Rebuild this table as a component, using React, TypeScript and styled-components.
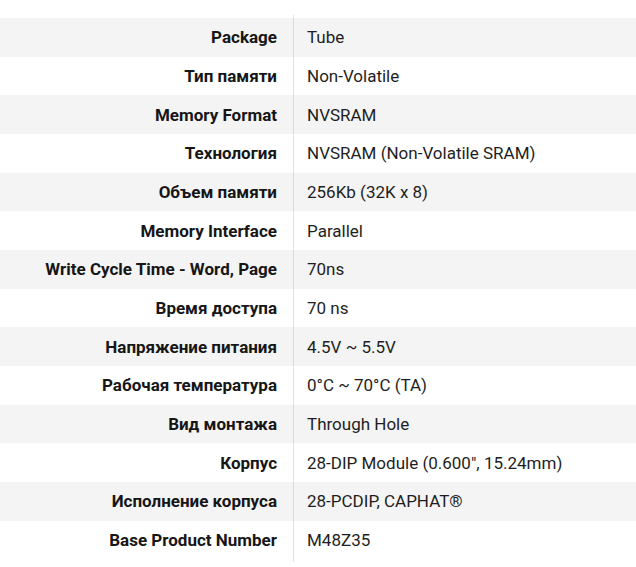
import React from "react";
import styled, { createGlobalStyle } from "styled-components";

const Global = createGlobalStyle`
  html, body { margin: 0; padding: 0; background: #ffffff; }
  body { font-family: Roboto, "Liberation Sans", sans-serif; color: #1b1b1b; }
`;

const Page = styled.div`
  padding-top: 15px;
`;

const Table = styled.div`
  display: flex;
  flex-direction: column;
  padding: 3px 0;
  background: linear-gradient(#e3e3e3, #e3e3e3) no-repeat 293px 0 / 1px 100%;
`;

const Row = styled.div<{ $shaded: boolean }>`
  display: grid;
  grid-template-columns: 293px 1fr;
  height: 38.67px;
  align-items: center;
  background: ${(p) => (p.$shaded ? "rgba(0, 0, 0, 0.043)" : "transparent")};
`;

const Label = styled.div`
  text-align: right;
  padding-right: 16px;
  font-weight: 700;
  font-size: 17px;
  color: #161616;
  white-space: nowrap;
`;

const Value = styled.div`
  padding-left: 14px;
  font-size: 17px;
  color: #1e1e1e;
  white-space: nowrap;
`;

const rows: [string, string][] = [
  ["Package", "Tube"],
  ["Тип памяти", "Non-Volatile"],
  ["Memory Format", "NVSRAM"],
  ["Технология", "NVSRAM (Non-Volatile SRAM)"],
  ["Объем памяти", "256Kb (32K x 8)"],
  ["Memory Interface", "Parallel"],
  ["Write Cycle Time - Word, Page", "70ns"],
  ["Время доступа", "70 ns"],
  ["Напряжение питания", "4.5V ~ 5.5V"],
  ["Рабочая температура", "0°C ~ 70°C (TA)"],
  ["Вид монтажа", "Through Hole"],
  ["Корпус", "28-DIP Module (0.600\", 15.24mm)"],
  ["Исполнение корпуса", "28-PCDIP, CAPHAT®"],
  ["Base Product Number", "M48Z35"],
];

export default function App() {
  return (
    <>
      <Global />
      <Page>
        <Table>
          {rows.map(([k, v], i) => (
            <Row key={k} $shaded={i % 2 === 0}>
              <Label>{k}</Label>
              <Value>{v}</Value>
            </Row>
          ))}
        </Table>
      </Page>
    </>
  );
}
